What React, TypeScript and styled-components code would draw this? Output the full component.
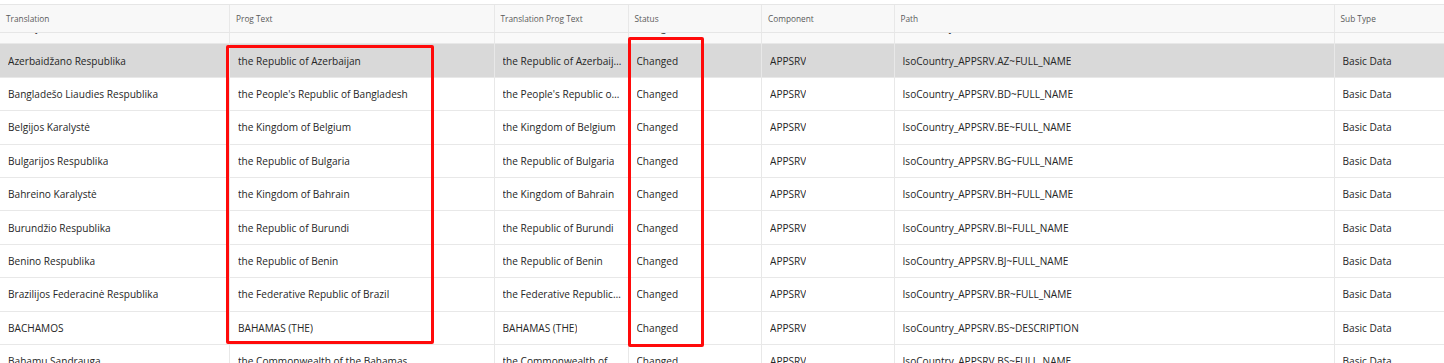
import React, { useEffect, useRef } from 'react';
import styled, { createGlobalStyle } from 'styled-components';

const GlobalStyle = createGlobalStyle`
  html, body {
    margin: 0;
    padding: 0;
    background: #ffffff;
  }
  body {
    font-family: 'Open Sans', 'Liberation Sans', sans-serif;
    overflow: hidden;
  }
`;

const COLUMNS = '230px 264.5px 134px 133.5px 132.5px 440px 160px';

const Page = styled.div`
  position: relative;
  width: 1444px;
  height: 363px;
  padding-top: 4px;
  box-sizing: border-box;
  overflow: hidden;
`;

const HeaderRow = styled.div`
  display: grid;
  grid-template-columns: ${COLUMNS};
  height: 29px;
  box-sizing: border-box;
  background: #f8f8f8;
  border-top: 1px solid #e6e6e6;
  border-bottom: 1px solid #e6e6e6;
`;

const HeaderCell = styled.div`
  display: flex;
  align-items: center;
  padding: 0 6px;
  border-right: 1px solid #e8e8e8;
  font-size: 8.3px;
  color: #5a5a5a;
  white-space: nowrap;
`;

const Body = styled.div`
  height: 330px;
  overflow: hidden;
`;

const Row = styled.div<{ $selected?: boolean; $muted?: boolean }>`
  display: grid;
  grid-template-columns: ${COLUMNS};
  height: 33.4px;
  box-sizing: border-box;
  border-bottom: 1px solid #e8e8e8;
  background: ${p => (p.$selected ? '#d9d9d9' : p.$muted ? '#f9f9f9' : '#ffffff')};
`;

const Cell = styled.div`
  display: flex;
  align-items: center;
  min-width: 0;
  padding: 0 6px 0 8px;
  border-right: 1px solid #e8e8e8;
  font-size: 10.1px;
  color: #262626;
`;

const CellText = styled.span`
  white-space: nowrap;
  overflow: hidden;
  text-overflow: ellipsis;
  line-height: 16px;
`;

const Highlight = styled.div<{ $left: number; $top: number; $width: number; $height: number }>`
  position: absolute;
  left: ${p => p.$left}px;
  top: ${p => p.$top}px;
  width: ${p => p.$width}px;
  height: ${p => p.$height}px;
  box-sizing: border-box;
  border: 3.5px solid #ff0a0a;
  border-radius: 2px;
  pointer-events: none;
`;

const headers = ['Translation', 'Prog Text', 'Translation Prog Text', 'Status', 'Component', 'Path', 'Sub Type'];

type Entry = { translation: string; prog: string; code: string; attr?: string };

const rows: Entry[] = [
  { translation: 'Austrija', prog: 'AUSTRIA', code: 'AT' },
  { translation: 'Azerbaidžano Respublika', prog: 'the Republic of Azerbaijan', code: 'AZ' },
  { translation: 'Bangladešo Liaudies Respublika', prog: "the People's Republic of Bangladesh", code: 'BD' },
  { translation: 'Belgijos Karalystė', prog: 'the Kingdom of Belgium', code: 'BE' },
  { translation: 'Bulgarijos Respublika', prog: 'the Republic of Bulgaria', code: 'BG' },
  { translation: 'Bahreino Karalystė', prog: 'the Kingdom of Bahrain', code: 'BH' },
  { translation: 'Burundžio Respublika', prog: 'the Republic of Burundi', code: 'BI' },
  { translation: 'Benino Respublika', prog: 'the Republic of Benin', code: 'BJ' },
  { translation: 'Brazilijos Federacinė Respublika', prog: 'the Federative Republic of Brazil', code: 'BR' },
  { translation: 'BACHAMOS', prog: 'BAHAMAS (THE)', code: 'BS', attr: 'DESCRIPTION' },
  { translation: 'Bahamų Sandrauga', prog: 'the Commonwealth of the Bahamas', code: 'BS' },
];

export default function App() {
  const bodyRef = useRef<HTMLDivElement>(null);

  useEffect(() => {
    // list is scrolled a little, the first row is cut by the header
    if (bodyRef.current) bodyRef.current.scrollTop = 22;
  }, []);

  return (
    <>
      <GlobalStyle />
      <Page>
        <HeaderRow>
          {headers.map(h => (
            <HeaderCell key={h}>{h}</HeaderCell>
          ))}
        </HeaderRow>

        <Body ref={bodyRef}>
          {rows.map((r, i) => (
            <Row key={r.code + i} $selected={i === 1} $muted={i === 0}>
              <Cell><CellText>{r.translation}</CellText></Cell>
              <Cell><CellText>{r.prog}</CellText></Cell>
              <Cell><CellText>{r.prog}</CellText></Cell>
              <Cell><CellText>Changed</CellText></Cell>
              <Cell><CellText>APPSRV</CellText></Cell>
              <Cell><CellText>IsoCountry_APPSRV.{r.code}~{r.attr ?? 'FULL_NAME'}</CellText></Cell>
              <Cell><CellText>Basic Data</CellText></Cell>
            </Row>
          ))}
        </Body>

        <Highlight $left={226} $top={45} $width={208} $height={299} />
        <Highlight $left={628} $top={37} $width={76} $height={310} />
      </Page>
    </>
  );
}
